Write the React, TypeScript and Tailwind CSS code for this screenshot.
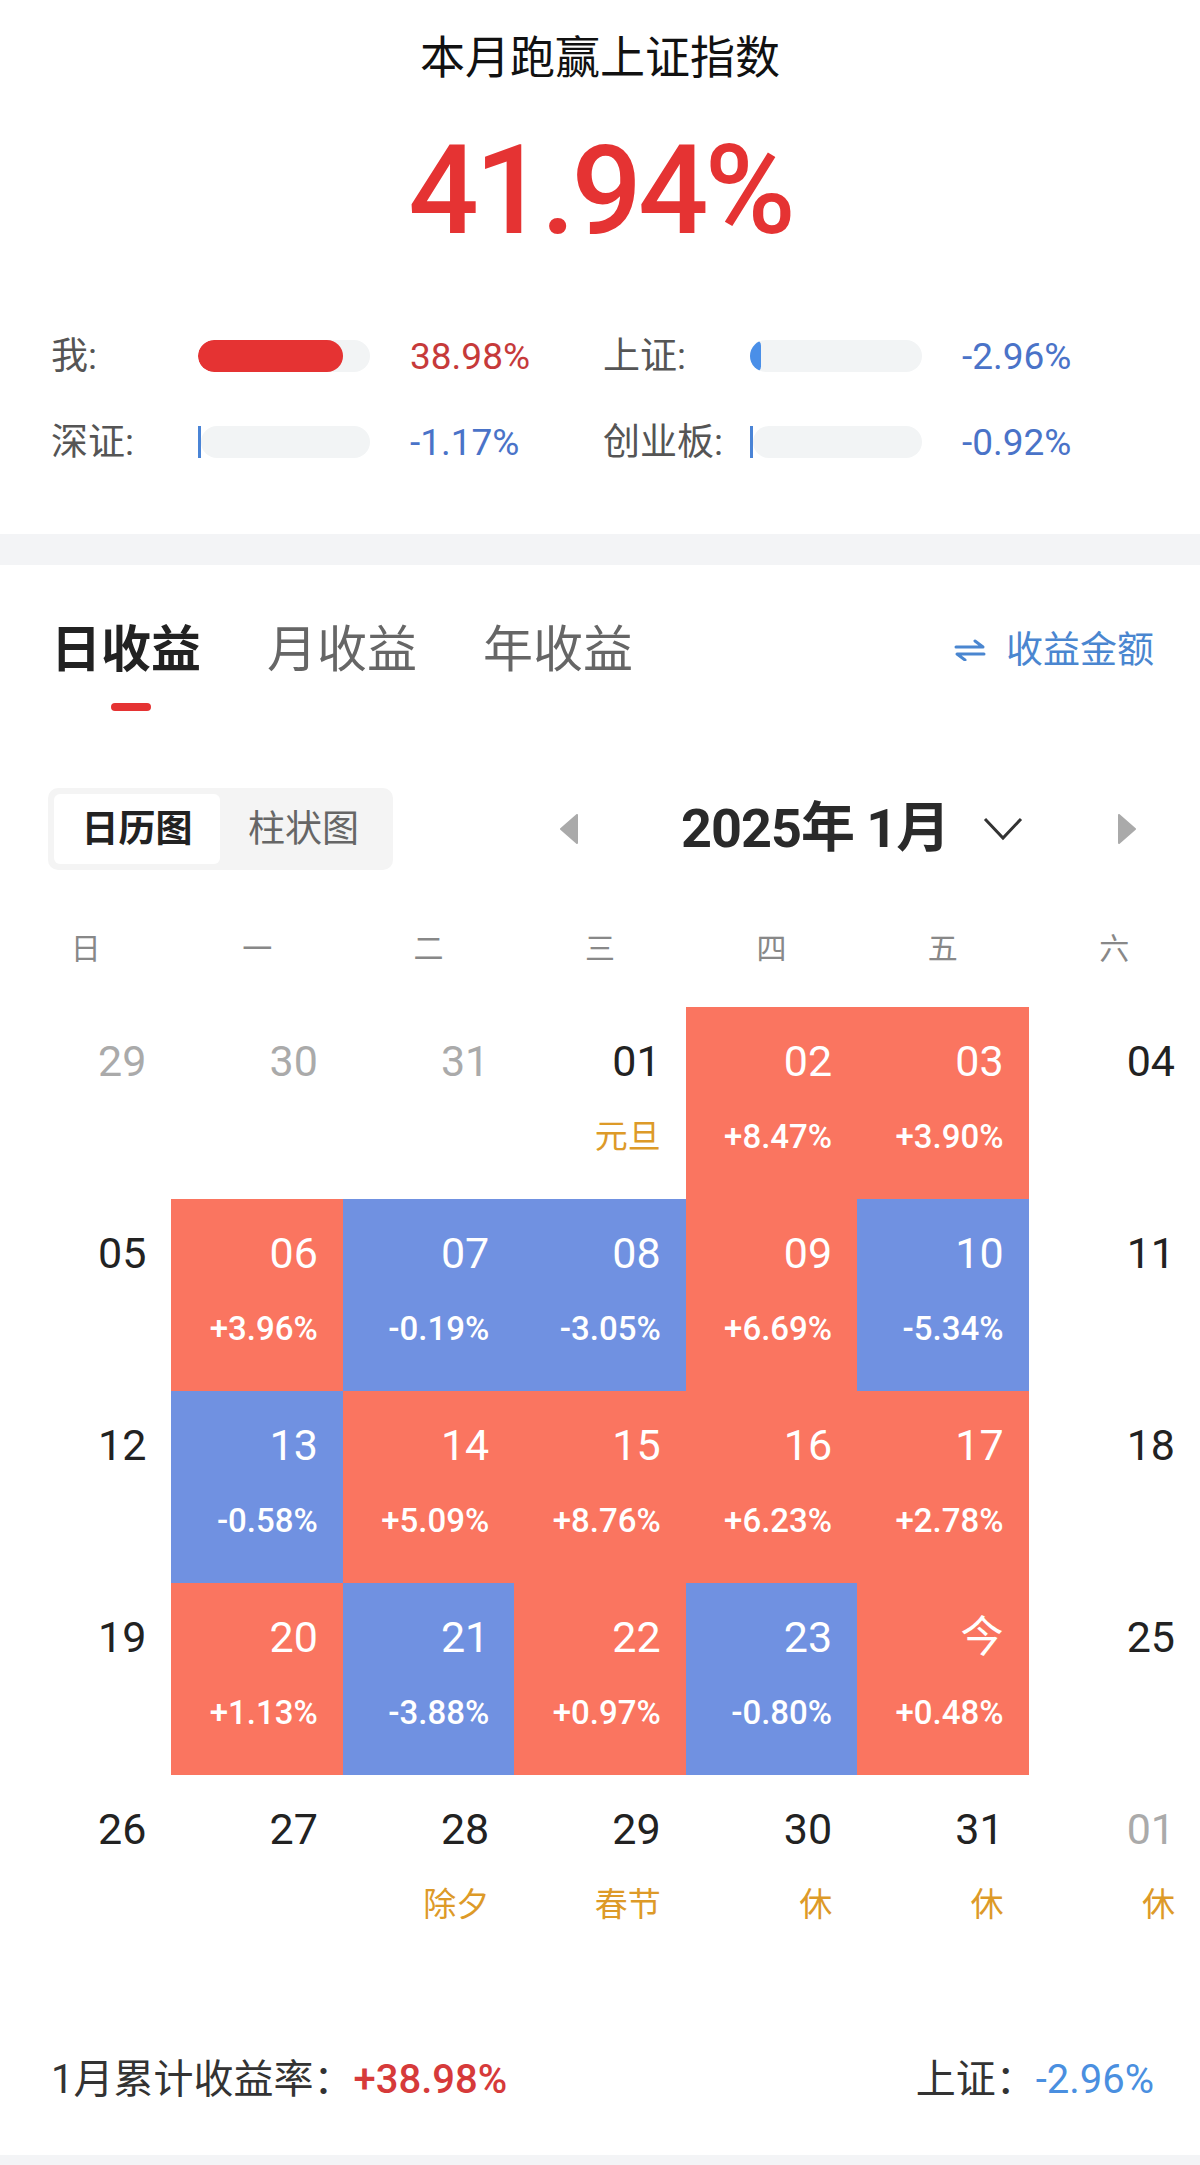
import clsx from 'clsx';

type Tone = 'muted' | 'plain' | 'red' | 'blue';
type Cell = { d: string; tone: Tone; sub?: string; hol?: boolean };

const weeks: Cell[][] = [
  [
    { d: '29', tone: 'muted' },
    { d: '30', tone: 'muted' },
    { d: '31', tone: 'muted' },
    { d: '01', tone: 'plain', sub: '元旦', hol: true },
    { d: '02', tone: 'red', sub: '+8.47%' },
    { d: '03', tone: 'red', sub: '+3.90%' },
    { d: '04', tone: 'plain' },
  ],
  [
    { d: '05', tone: 'plain' },
    { d: '06', tone: 'red', sub: '+3.96%' },
    { d: '07', tone: 'blue', sub: '-0.19%' },
    { d: '08', tone: 'blue', sub: '-3.05%' },
    { d: '09', tone: 'red', sub: '+6.69%' },
    { d: '10', tone: 'blue', sub: '-5.34%' },
    { d: '11', tone: 'plain' },
  ],
  [
    { d: '12', tone: 'plain' },
    { d: '13', tone: 'blue', sub: '-0.58%' },
    { d: '14', tone: 'red', sub: '+5.09%' },
    { d: '15', tone: 'red', sub: '+8.76%' },
    { d: '16', tone: 'red', sub: '+6.23%' },
    { d: '17', tone: 'red', sub: '+2.78%' },
    { d: '18', tone: 'plain' },
  ],
  [
    { d: '19', tone: 'plain' },
    { d: '20', tone: 'red', sub: '+1.13%' },
    { d: '21', tone: 'blue', sub: '-3.88%' },
    { d: '22', tone: 'red', sub: '+0.97%' },
    { d: '23', tone: 'blue', sub: '-0.80%' },
    { d: '今', tone: 'red', sub: '+0.48%' },
    { d: '25', tone: 'plain' },
  ],
  [
    { d: '26', tone: 'plain' },
    { d: '27', tone: 'plain' },
    { d: '28', tone: 'plain', sub: '除夕', hol: true },
    { d: '29', tone: 'plain', sub: '春节', hol: true },
    { d: '30', tone: 'plain', sub: '休', hol: true },
    { d: '31', tone: 'plain', sub: '休', hol: true },
    { d: '01', tone: 'muted', sub: '休', hol: true },
  ],
];

const weekdays = ['日', '一', '二', '三', '四', '五', '六'];

function StatBar({ fill, kind }: { fill: number; kind: 'red' | 'blue' | 'line' }) {
  if (kind === 'line') {
    // tiny move: just a hairline at the start of the track
    return (
      <div className="flex h-[32px] w-[172px] items-center">
        <div className="h-[32px] w-[3px] bg-[#4a84d6]" />
        <div className="h-[32px] flex-1 rounded-full bg-[#f2f4f5]" />
      </div>
    );
  }
  return (
    <div className="h-[32px] w-[172px] overflow-hidden rounded-full bg-[#f2f4f5]">
      <div
        className={clsx('h-full rounded-full', kind === 'red' ? 'bg-[#e53333]' : 'bg-[#4a8fe8]')}
        style={{ width: fill }}
      />
    </div>
  );
}

function Stat({ label, fill, kind, value, up }: { label: string; fill: number; kind: 'red' | 'blue' | 'line'; value: string; up?: boolean }) {
  return (
    <div className="flex items-center">
      <span className="w-[147px] text-[37px] leading-[37px] text-[#555]">{label}</span>
      <StatBar fill={fill} kind={kind} />
      <span className={clsx('ml-[40px] text-[37px] leading-[37px]', up ? 'text-[#c63a3a]' : 'text-[#4a73c8]')}>{value}</span>
    </div>
  );
}

function DayCell({ c }: { c: Cell }) {
  const filled = c.tone === 'red' || c.tone === 'blue';
  return (
    <div
      className={clsx(
        'flex h-[192px] flex-col items-end pr-[25px] pt-[33px]',
        c.tone === 'red' && 'bg-[#fa7560]',
        c.tone === 'blue' && 'bg-[#7091e1]',
      )}
    >
      <span
        className={clsx(
          'text-[43px] leading-[42px]',
          filled ? 'text-white' : c.tone === 'muted' ? 'text-[#aaaaaa]' : 'text-[#222]',
        )}
      >
        {c.d}
      </span>
      {c.sub && (
        <span
          className={clsx(
            'mt-[39px] text-[33px] leading-[32px]',
            c.hol ? 'text-[#dd9a28]' : 'font-medium text-white',
          )}
        >
          {c.sub}
        </span>
      )}
    </div>
  );
}

export default function App() {
  return (
    <div className="w-[1200px] bg-white font-['Roboto','Noto_Sans_CJK_SC',sans-serif]">
      {/* summary */}
      <div className="flex flex-col pb-[67px] pt-[37px]">
        <h1 className="text-center text-[45px] leading-[44px] text-[#111]">本月跑赢上证指数</h1>
        <div className="mt-[48px] text-center text-[124px] font-medium leading-[124px] tracking-[-4px] text-[#e53333]">
          41.94%
        </div>
        <div className="mt-[78px] flex flex-col gap-[36px] pl-[51px]">
          <div className="flex h-[50px] items-center">
            <div className="w-[552px]">
              <Stat label="我:" fill={145} kind="red" value="38.98%" up />
            </div>
            <Stat label="上证:" fill={11} kind="blue" value="-2.96%" />
          </div>
          <div className="flex h-[50px] items-center">
            <div className="w-[552px]">
              <Stat label="深证:" fill={0} kind="line" value="-1.17%" />
            </div>
            <Stat label="创业板:" fill={0} kind="line" value="-0.92%" />
          </div>
        </div>
      </div>

      <div className="h-[31px] bg-[#f3f4f6]" />

      {/* tabs */}
      <div className="flex items-center justify-between pl-[51px] pr-[46px] pt-[60px]">
        <div className="flex items-center gap-[66px] text-[50px] leading-[50px]">
          <span className="font-bold text-[#222]">日收益</span>
          <span className="text-[#666]">月收益</span>
          <span className="text-[#666]">年收益</span>
        </div>
        <div className="flex items-center gap-[20px] text-[37px] leading-[37px] text-[#4a86d0]">
          <svg width="32" height="22" viewBox="0 0 32 22" fill="none" stroke="#4a86d0" strokeWidth="3" strokeLinecap="round" strokeLinejoin="round">
            <path d="M2 8 H29 L21 2" />
            <path d="M30 15 H3 L11 21" />
          </svg>
          <span>收益金额</span>
        </div>
      </div>
      <div className="ml-[111px] mt-[28px] h-[8px] w-[40px] rounded-full bg-[#e53333]" />

      {/* view switch + month */}
      <div className="mt-[77px] flex items-center pl-[48px]">
        <div className="flex h-[82px] w-[345px] items-center rounded-[10px] bg-[#f4f4f4] p-[6px] text-[37px] leading-[37px]">
          <div className="flex h-full w-[166px] items-center justify-center rounded-[6px] bg-white font-bold text-[#222]">日历图</div>
          <div className="flex h-full flex-1 items-center justify-center text-[#666]">柱状图</div>
        </div>
        <svg className="ml-[167px]" width="18" height="30" viewBox="0 0 18 30">
          <path d="M17 1 L17 29 L1 15 Z" fill="#aaaaaa" stroke="#aaaaaa" strokeWidth="2" strokeLinejoin="round" />
        </svg>
        <span className="ml-[103px] text-[54px] font-bold leading-[54px] tracking-[-1px] text-[#2a2a2a]">2025年 1月</span>
        <svg className="ml-[34px]" width="40" height="26" viewBox="0 0 40 26" fill="none" stroke="#333" strokeWidth="3">
          <path d="M2 3 L20 22 L38 3" />
        </svg>
        <svg className="ml-[95px]" width="18" height="30" viewBox="0 0 18 30">
          <path d="M1 1 L1 29 L17 15 Z" fill="#aaaaaa" stroke="#aaaaaa" strokeWidth="2" strokeLinejoin="round" />
        </svg>
      </div>

      {/* calendar */}
      <div className="mt-[64px] grid grid-cols-7 text-center text-[30px] leading-[30px] text-[#888]">
        {weekdays.map((w) => (
          <span key={w}>{w}</span>
        ))}
      </div>
      <div className="mt-[43px] grid grid-cols-7">
        {weeks.flat().map((c, i) => (
          <DayCell key={i} c={c} />
        ))}
      </div>

      {/* footer */}
      <div className="mt-[93px] flex items-center justify-between pb-[55px] pl-[51px] pr-[46px] text-[40px] leading-[40px]">
        <div className="flex items-center">
          <span className="text-[#333]">1月累计收益率：</span>
          <span className="font-medium text-[#d63a3a]">+38.98%</span>
        </div>
        <div className="flex items-center">
          <span className="text-[#333]">上证：</span>
          <span className="text-[#4a8fe0]">-2.96%</span>
        </div>
      </div>
      <div className="h-[10px] bg-[#f3f4f6]" />
    </div>
  );
}
